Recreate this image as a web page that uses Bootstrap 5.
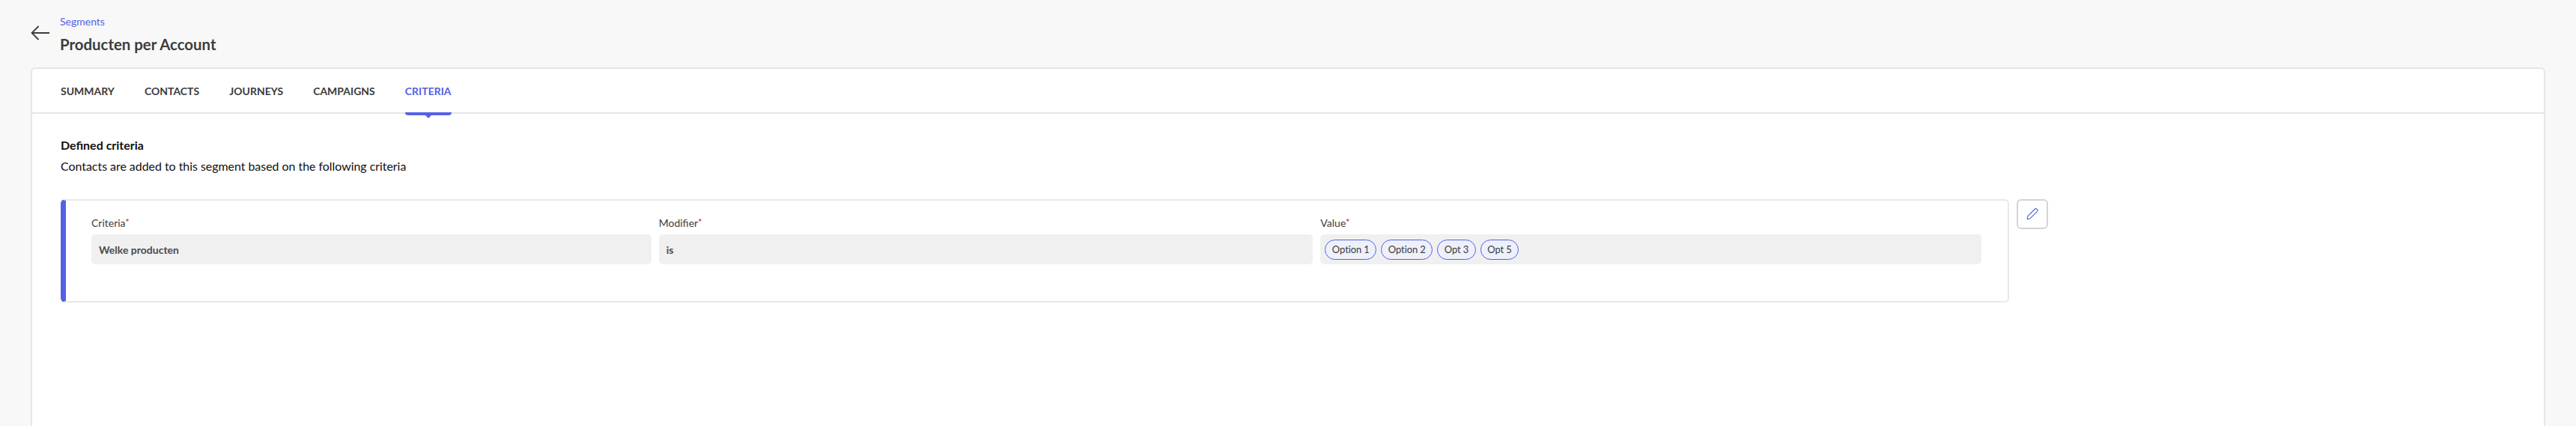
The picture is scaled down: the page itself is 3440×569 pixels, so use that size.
<!DOCTYPE html>
<html lang="en">
<head>
<meta charset="utf-8">
<title>Producten per Account</title>
<link href="https://cdn.jsdelivr.net/npm/bootstrap@5.3.0/dist/css/bootstrap.min.css" rel="stylesheet">
<style>
html,body{height:100%;overflow:hidden}
body{font-family:Lato,"Liberation Sans",sans-serif;background:#f8f8f8;color:#3c3c3c;font-size:16px}
.page-head{height:90px;padding:20px 0 0 41px;gap:14px}
.back-arrow{width:25px;height:20px;margin-top:14px;flex:none}
.crumb{font-size:14px;line-height:18px;color:#5561e4;text-decoration:none;display:block}
.page-title{font-size:20.4px;font-weight:700;line-height:26px;margin:8px 0 0;color:#3c3c3c}
.main-panel{margin:0 41px;height:479px;overflow:hidden;background:#fff;border:2px solid #e6e6ea;border-bottom:0;border-radius:6px 6px 0 0}
.tab-row{height:60px;border-bottom:2px solid #e4e4ec;padding-left:38px;gap:40px}
.tab-row a{position:relative;font-size:14px;font-weight:700;line-height:59px;height:58px;color:#3c3c3c;text-decoration:none}
.tab-row a.on{color:#5561e4}
.tab-row a.on::after{content:"";position:absolute;left:0;right:0;top:58px;height:4px;background:#5561e4;border-radius:0 0 4px 4px}
.tab-row a.on::before{content:"";position:absolute;left:50%;top:61px;margin-left:-5px;border:5px solid transparent;border-top-color:#5561e4;border-bottom:0}
.crit-zone{padding:31px 0 0 38px}
.crit-title{font-size:16px;font-weight:700;line-height:22px;margin:0;color:#111}
.crit-sub{font-size:16px;line-height:22px;margin:6px 0 33px;color:#111;letter-spacing:-.05px}
.crit-wrap{gap:10px}
.crit-box{width:2602px;height:138px;border:2px solid #e8e8e8;border-left:7px solid #5561e4;border-radius:6px;padding:20px 35px 0 34px;gap:10px}
.fld-a{width:748px}.fld-b{width:874px}.fld-c{width:883px}
.fld-label{font-size:14px;line-height:20px;margin-bottom:5px;color:#3c3c3c}
.fld-label i{color:#e8262a;font-style:normal;font-weight:700;font-size:12px;vertical-align:2px;line-height:1}
.fld-value{height:40px;background:#f0f0f0;border-radius:5px;padding:0 10px;font-size:14px;font-weight:700;color:#4a4a4a}
.fld-value.pills{padding:0 6px;gap:6px}
.opt-pill{height:27px;padding:0 8.5px;border:1.5px solid #5561e4;border-radius:14px;background:#eef0fb;font-size:13px;font-weight:400;line-height:24px;color:#3c3c3c;letter-spacing:-.1px}
.edit-btn{width:42px;height:40px;padding:0;background:#fff;border:2px solid #d4d4d4;border-radius:6px}
</style>
</head>
<body>
<header class="page-head d-flex">
  <svg class="back-arrow" viewBox="0 0 25 20" fill="none" stroke="#3c3c3c" stroke-width="1.8"><path d="M25 10H1.5M10.5 1L1.5 10l9 9"/></svg>
  <div>
    <a class="crumb" href="#">Segments</a>
    <h1 class="page-title">Producten per Account</h1>
  </div>
</header>
<main class="main-panel">
  <nav class="tab-row d-flex">
    <a href="#">SUMMARY</a>
    <a href="#">CONTACTS</a>
    <a href="#">JOURNEYS</a>
    <a href="#">CAMPAIGNS</a>
    <a href="#" class="on">CRITERIA</a>
  </nav>
  <section class="crit-zone">
    <h2 class="crit-title">Defined criteria</h2>
    <p class="crit-sub">Contacts are added to this segment based on the following criteria</p>
    <div class="crit-wrap d-flex align-items-start">
      <div class="crit-box d-flex">
        <div class="fld-a">
          <div class="fld-label">Criteria<i>*</i></div>
          <div class="fld-value d-flex align-items-center">Welke producten</div>
        </div>
        <div class="fld-b">
          <div class="fld-label">Modifier<i>*</i></div>
          <div class="fld-value d-flex align-items-center">is</div>
        </div>
        <div class="fld-c">
          <div class="fld-label">Value<i>*</i></div>
          <div class="fld-value pills d-flex align-items-center">
            <span class="opt-pill">Option 1</span>
            <span class="opt-pill">Option 2</span>
            <span class="opt-pill">Opt 3</span>
            <span class="opt-pill">Opt 5</span>
          </div>
        </div>
      </div>
      <button type="button" class="btn edit-btn d-flex align-items-center justify-content-center" aria-label="Edit">
        <svg width="16" height="16" viewBox="0 0 16 16" fill="none" stroke="#5561e4" stroke-width="1.2" stroke-linejoin="round"><path d="M11.5 1.2a1.6 1.6 0 0 1 2.2 0l.9.9a1.6 1.6 0 0 1 0 2.2L5.2 13.7 1.3 15l.6-4.4z"/></svg>
      </button>
    </div>
  </section>
</main>
<script src="https://cdn.jsdelivr.net/npm/bootstrap@5.3.0/dist/js/bootstrap.bundle.min.js"></script>
</body>
</html>
